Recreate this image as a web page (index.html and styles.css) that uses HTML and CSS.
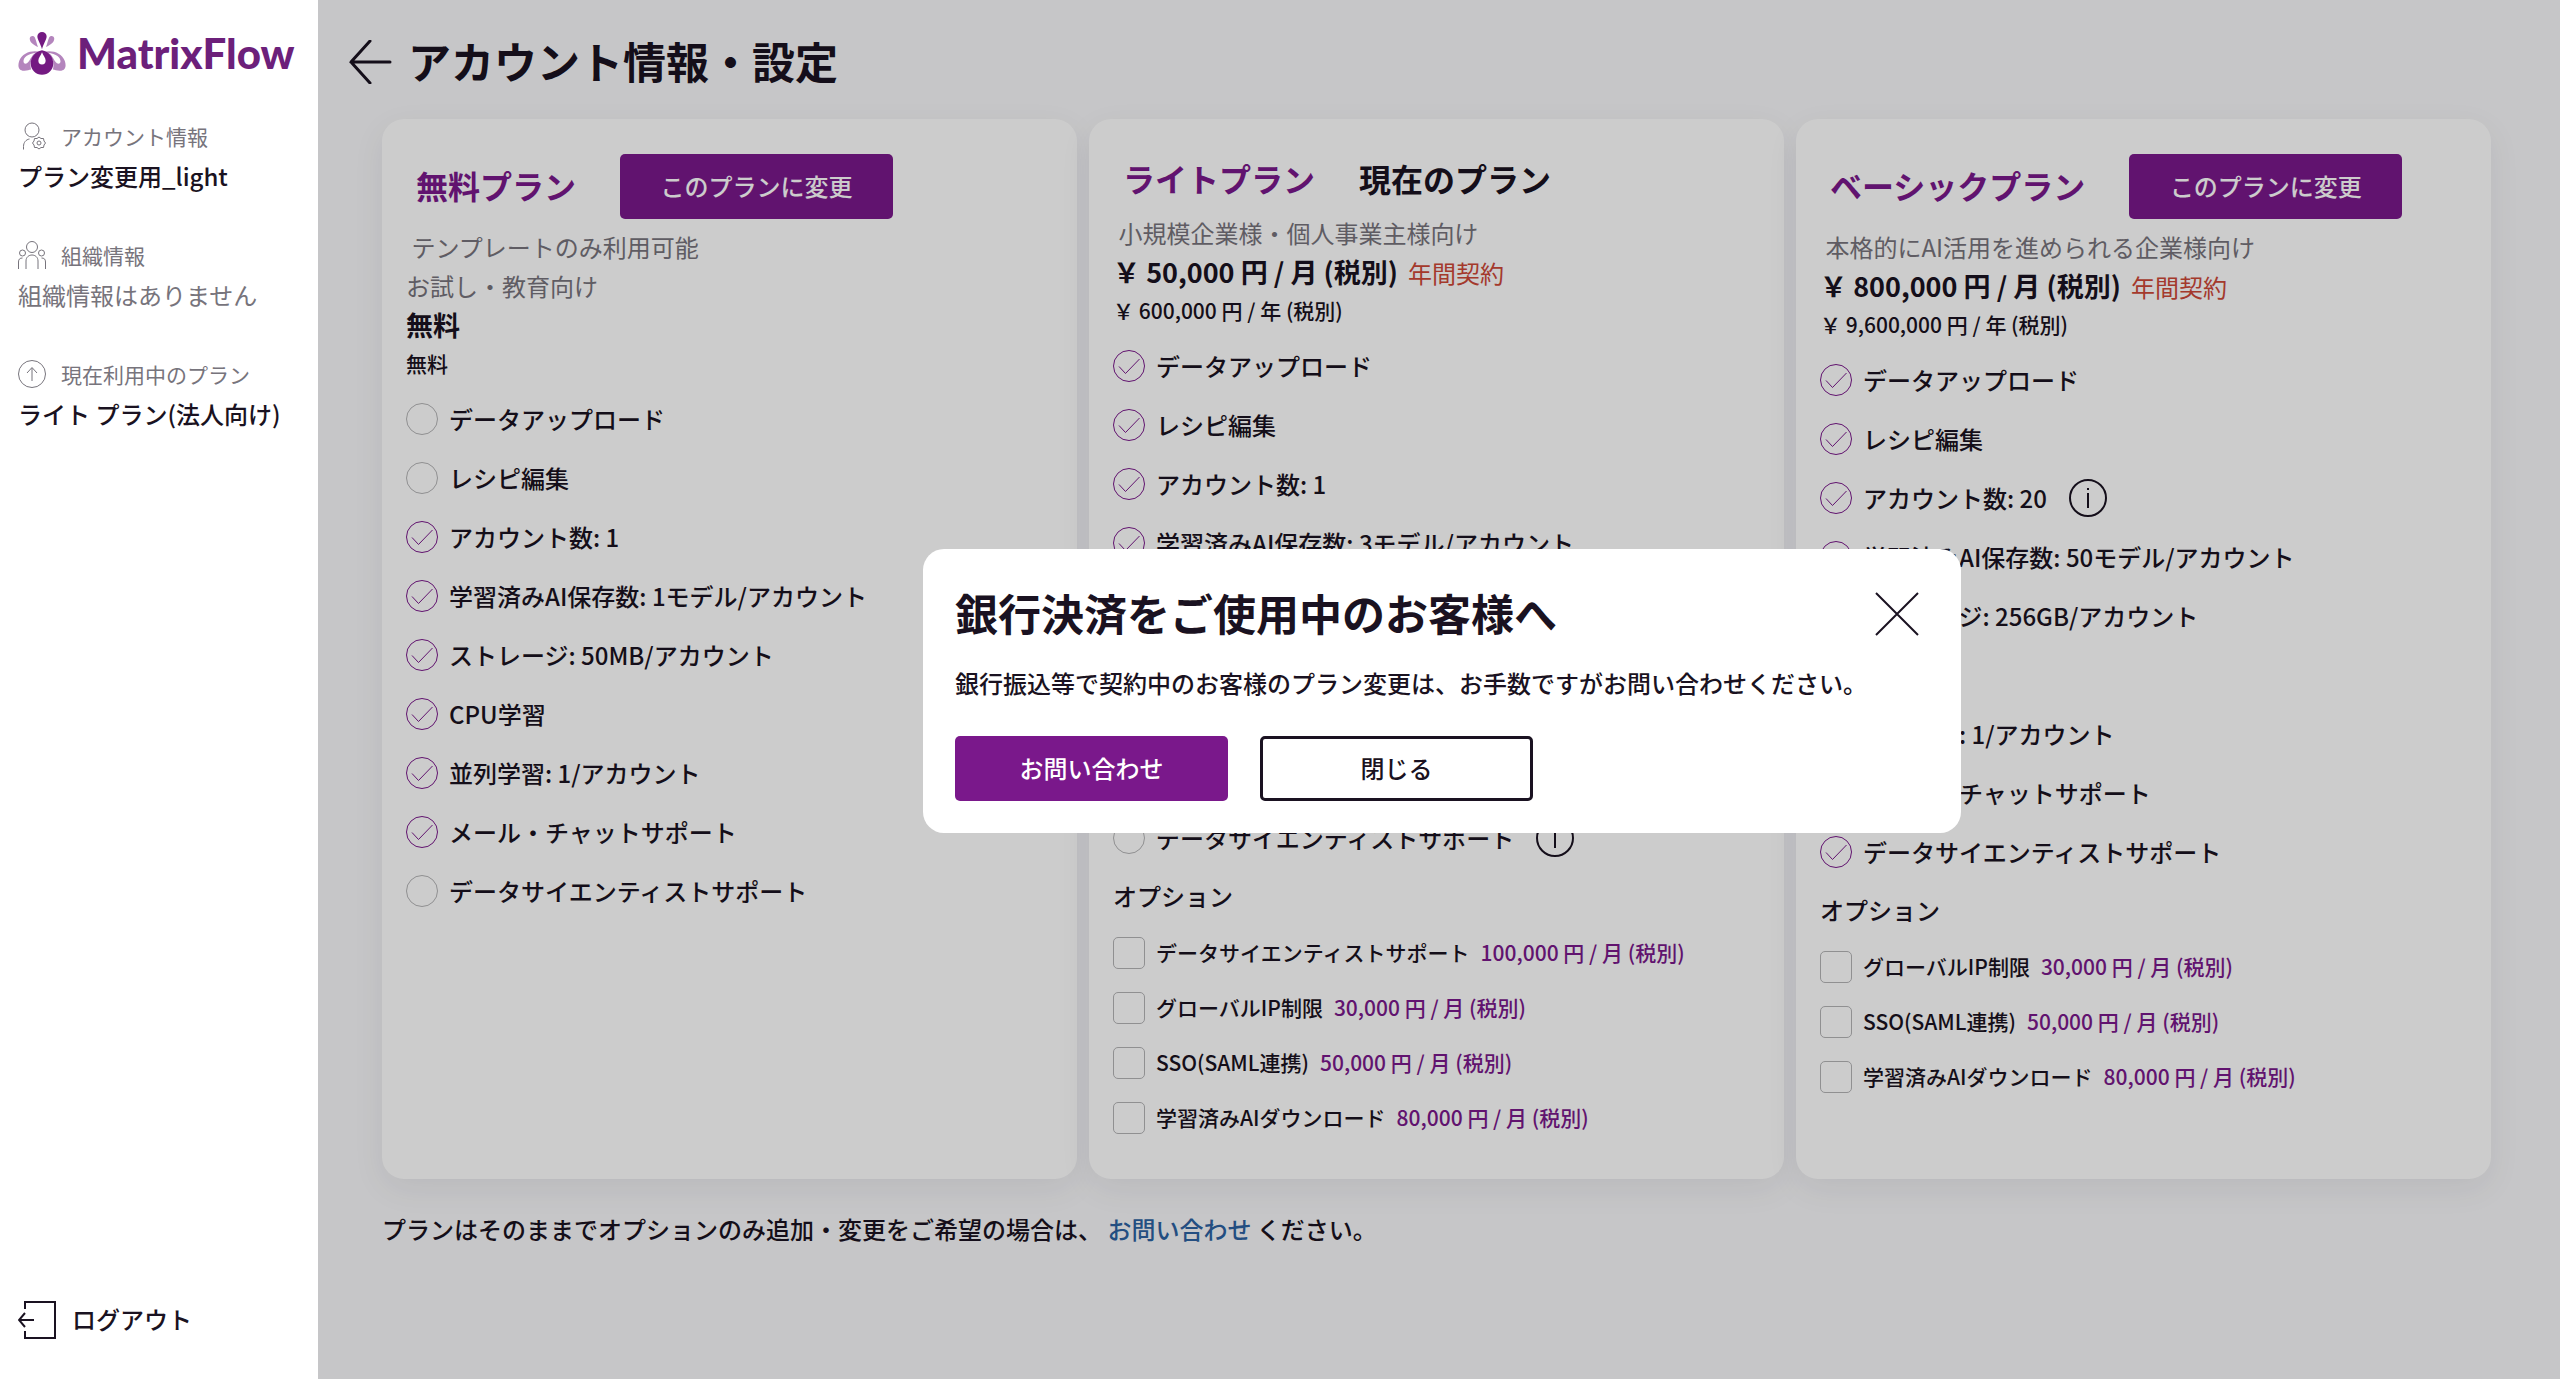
FILE: index.html
```html
<!DOCTYPE html>
<html lang="ja">
<head>
  <meta charset="UTF-8" />
  <title>アカウント情報・設定 | MatrixFlow</title>
  <meta name="viewport" content="width=device-width, initial-scale=1.0" />
  <link rel="stylesheet" href="styles.css">
</head>
<body>
  <!-- shared icons -->
  <svg class="sprite" aria-hidden="true">
    <symbol id="on" viewBox="0 0 32 32">
      <circle cx="16" cy="16" r="15.5" />
      <path d="M6 16.5l6.500 7L26.500 9" />
    </symbol>
    <symbol id="off" viewBox="0 0 32 32">
      <circle cx="16" cy="16" r="15.5" />
    </symbol>
    <symbol id="info" viewBox="0 0 38 38">
      <circle cx="19" cy="19" r="18" />
      <path d="M19 14v15M19 9v2" />
    </symbol>
  </svg>

  <aside class="sidebar">
    <a class="logo" href="#">
      <svg class="logo-mark" viewBox="0 0 144 130" aria-hidden="true">
        <path class="deep" d="M72 52C68 36 58 24 58 13a14 13 0 0 1 28 0C86 24 76 36 72 52z" />
        <path class="pale" d="M60 45C46 40 34 30 35 19c2-9 13-9 16-1 4 9 5 18 9 27z" />
        <path class="pale" d="M84 45c14-5 26-15 25-26-2-9-13-9-16-1-4 9-5 18-9 27z" />
        <path class="pale" fill-rule="evenodd" d="M66 60C42 54 12 62 3 88c-6 18 0 30 16 29 8-1 15-3 20-4-6-22 4-43 27-53zM56 63C38 66 36 96 22 96 10 94 14 66 56 63z" />
        <path class="pale" fill-rule="evenodd" d="M78 60c24-6 54 2 63 28 6 18 0 30-16 29-8-1-15-3-20-4 6-22-4-43-27-53zM88 63c18 3 20 33 34 33 12-2 8-30-34-33z" />
        <path class="deep" fill-rule="evenodd" d="M72 55c22 4 34 22 34 40a34 34 0 0 1-68 0c0-18 12-36 34-40zM72 61c-3 9-11 17-11 25a11 12 0 0 0 22 0c0-8-8-16-11-25z" />
      </svg>
      <span>MatrixFlow</span>
    </a>

    <section class="side-item">
      <h2>
        <svg viewBox="0 0 28 28" aria-hidden="true">
          <circle cx="14" cy="8" r="7" />
          <path d="M5.500 27.500v-3c0-4 2.500-7 6-7.500" />
          <path d="M19 16.500l2-1.500 2 1.500h2.500l.5 2.500 1.500 2-1.500 2-.5 2.500H23l-2 1.500-2-1.500h-2.500L16 23l-1.500-2 1.500-2 .5-2.500z" />
          <circle cx="21" cy="21" r="2" />
        </svg>
        アカウント情報
      </h2>
      <p>プラン変更用_light</p>
    </section>

    <section class="side-item muted">
      <h2>
        <svg viewBox="0 0 28 28" aria-hidden="true">
          <circle cx="14" cy="6" r="5.500" />
          <circle cx="4.500" cy="12" r="3" />
          <circle cx="23.500" cy="12" r="3" />
          <path d="M8 28v-8c0-8 12-8 12 0v8M.5 28v-7c0-3 1.500-4 4-4M27.500 28v-7c0-3-1.500-4-4-4" />
        </svg>
        組織情報
      </h2>
      <p>組織情報はありません</p>
    </section>

    <section class="side-item">
      <h2>
        <svg viewBox="0 0 28 28" aria-hidden="true">
          <circle cx="14" cy="14" r="13.500" />
          <path d="M14 21V8M9 13l5-5.500 5 5.500" />
        </svg>
        現在利用中のプラン
      </h2>
      <p>ライト プラン(法人向け)</p>
    </section>

    <button class="logout" type="button">
      <svg viewBox="0 0 38 38" aria-hidden="true">
        <path d="M7 8V1h30v36H7v-7M1 19h15M7 12l-6 7 6 7" />
      </svg>
      <span>ログアウト</span>
    </button>
  </aside>

  <main class="main">
    <header class="page-header">
      <a href="#" aria-label="戻る">
        <svg viewBox="0 0 44 44"><path d="M42 22H3M22 1L3 22l19 21" /></svg>
      </a>
      <h1>アカウント情報・設定</h1>
    </header>

    <div class="plans">
      <article class="plan">
        <div class="plan-header">
          <h2>無料プラン</h2>
          <button class="btn btn-primary" type="button">このプランに変更</button>
        </div>
        <p class="desc">&nbsp;テンプレートのみ利用可能<br>お試し・教育向け</p>
        <p class="price">無料</p>
        <p class="yearly">無料</p>
        <ul class="features">
          <li class="off"><svg><use href="#off" /></svg>データアップロード</li>
          <li class="off"><svg><use href="#off" /></svg>レシピ編集</li>
          <li><svg><use href="#on" /></svg>アカウント数: 1</li>
          <li><svg><use href="#on" /></svg>学習済みAI保存数: 1モデル/アカウント</li>
          <li><svg><use href="#on" /></svg>ストレージ: 50MB/アカウント</li>
          <li><svg><use href="#on" /></svg>CPU学習</li>
          <li><svg><use href="#on" /></svg>並列学習: 1/アカウント</li>
          <li><svg><use href="#on" /></svg>メール・チャットサポート</li>
          <li class="off"><svg><use href="#off" /></svg>データサイエンティストサポート</li>
        </ul>
      </article>

      <article class="plan">
        <div class="plan-header">
          <h2>ライトプラン</h2>
          <strong>現在のプラン</strong>
        </div>
        <p class="desc">&nbsp;小規模企業様・個人事業主様向け</p>
        <p class="price">&#65509; 50,000 円 / 月 (税別) <span class="term">年間契約</span></p>
        <p class="yearly">&#65509; 600,000 円 / 年 (税別)</p>
        <ul class="features">
          <li><svg><use href="#on" /></svg>データアップロード</li>
          <li><svg><use href="#on" /></svg>レシピ編集</li>
          <li><svg><use href="#on" /></svg>アカウント数: 1</li>
          <li><svg><use href="#on" /></svg>学習済みAI保存数: 3モデル/アカウント</li>
          <li><svg><use href="#on" /></svg>ストレージ: 10GB/アカウント</li>
          <li><svg><use href="#on" /></svg>CPU学習</li>
          <li><svg><use href="#on" /></svg>並列学習: 1/アカウント</li>
          <li><svg><use href="#on" /></svg>メール・チャットサポート</li>
          <li class="off"><svg><use href="#off" /></svg>データサイエンティストサポート<svg class="info"><use href="#info" /></svg></li>
        </ul>
        <h3>オプション</h3>
        <div class="options">
          <label><input type="checkbox">データサイエンティストサポート <span>100,000 円 / 月 (税別)</span></label>
          <label><input type="checkbox">グローバルIP制限 <span>30,000 円 / 月 (税別)</span></label>
          <label><input type="checkbox">SSO(SAML連携) <span>50,000 円 / 月 (税別)</span></label>
          <label><input type="checkbox">学習済みAIダウンロード <span>80,000 円 / 月 (税別)</span></label>
        </div>
      </article>

      <article class="plan">
        <div class="plan-header">
          <h2>ベーシックプラン</h2>
          <button class="btn btn-primary" type="button">このプランに変更</button>
        </div>
        <p class="desc">&nbsp;本格的にAI活用を進められる企業様向け</p>
        <p class="price">&#65509; 800,000 円 / 月 (税別) <span class="term">年間契約</span></p>
        <p class="yearly">&#65509; 9,600,000 円 / 年 (税別)</p>
        <ul class="features">
          <li><svg><use href="#on" /></svg>データアップロード</li>
          <li><svg><use href="#on" /></svg>レシピ編集</li>
          <li><svg><use href="#on" /></svg>アカウント数: 20<svg class="info"><use href="#info" /></svg></li>
          <li><svg><use href="#on" /></svg>学習済みAI保存数: 50モデル/アカウント</li>
          <li><svg><use href="#on" /></svg>ストレージ: 256GB/アカウント</li>
          <li><svg><use href="#on" /></svg>CPU学習</li>
          <li><svg><use href="#on" /></svg>並列学習: 1/アカウント</li>
          <li><svg><use href="#on" /></svg>メール・チャットサポート</li>
          <li><svg><use href="#on" /></svg>データサイエンティストサポート</li>
        </ul>
        <h3>オプション</h3>
        <div class="options">
          <label><input type="checkbox">グローバルIP制限 <span>30,000 円 / 月 (税別)</span></label>
          <label><input type="checkbox">SSO(SAML連携) <span>50,000 円 / 月 (税別)</span></label>
          <label><input type="checkbox">学習済みAIダウンロード <span>80,000 円 / 月 (税別)</span></label>
        </div>
      </article>
    </div>

    <p class="note">プランはそのままでオプションのみ追加・変更をご希望の場合は、 <a href="#">お問い合わせ</a> ください。</p>

    <div class="overlay">
      <div class="modal" role="dialog" aria-labelledby="modalTitle">
        <div class="modal-header">
          <h2 id="modalTitle">銀行決済をご使用中のお客様へ</h2>
          <button class="close" type="button" aria-label="閉じる">
            <svg viewBox="0 0 44 44"><path d="M1 1l42 42M43 1L1 43" /></svg>
          </button>
        </div>
        <p>銀行振込等で契約中のお客様のプラン変更は、お手数ですがお問い合わせください。</p>
        <div class="modal-actions">
          <button class="btn btn-primary" type="button">お問い合わせ</button>
          <button class="btn btn-outline" type="button">閉じる</button>
        </div>
      </div>
    </div>
  </main>
</body>
</html>
```

FILE: styles.css
```css
:root {
  --primary: #7a188b;
  --text: #1a1221;
  --gray: #77747c;
  --line: #b4b4b6;
  --bg: #f8f8fa;
}

* {
  box-sizing: border-box;
}

body {
  font-family: "Noto Sans CJK JP", sans-serif;
  font-size: 24px;
  font-weight: 500;
  line-height: 35px;
  color: var(--text);
  background: var(--bg);
  margin: 0;
  display: flex;
  min-height: 100vh;
}

h1, h2, h3, p, ul {
  margin: 0;
  padding: 0;
}

a {
  color: inherit;
  text-decoration: none;
}

button {
  font: inherit;
  color: inherit;
  cursor: pointer;
}

svg {
  display: block;
  flex-shrink: 0;
  fill: none;
  stroke: currentColor;
}

.sprite {
  position: absolute;
  width: 0;
  height: 0;
}

/* sidebar */
.sidebar {
  width: 318px;
  flex-shrink: 0;
  background: white;
  padding: 29px 18px 36px;
  display: flex;
  flex-direction: column;
}

.logo {
  display: flex;
  align-items: center;
  gap: 11px;
  height: 48px;
  margin-bottom: 43px;
  font-family: Lato, sans-serif;
  font-size: 42px;
  font-weight: 900;
  color: #6c207a;
}

.logo-mark {
  width: 48px;
  height: 43px;
  stroke: none;
}

.logo-mark .deep {
  fill: #741a82;
}

.logo-mark .pale {
  fill: #b485bd;
}

.side-item {
  margin-bottom: 42px;
}

.side-item h2 {
  display: flex;
  align-items: center;
  gap: 15px;
  height: 32px;
  font-size: 21px;
  font-weight: 400;
  color: var(--gray);
}

.side-item svg {
  width: 28px;
  height: 28px;
}

.side-item p {
  padding-top: 2px;
  line-height: 43px;
}

.muted p {
  font-weight: 400;
  color: var(--gray);
}

.logout {
  display: flex;
  align-items: center;
  gap: 16px;
  margin-top: auto;
  padding: 0;
  border: none;
  background: none;
}

.logout svg {
  width: 38px;
  height: 46px;
  stroke-width: 2;
}

.logout span {
  padding-bottom: 3px;
}

/* plan page */
.main {
  position: relative;
  flex: 1;
  padding: 28px 69px 0 64px;
}

.page-header {
  display: flex;
  align-items: center;
  gap: 16px;
  height: 67px;
  margin: 0 0 24px -34px;
}

.page-header svg {
  width: 44px;
  height: 44px;
  stroke-width: 3;
  stroke-linecap: round;
}

.page-header h1 {
  padding-bottom: 3px;
  font-size: 43px;
  font-weight: 700;
}

.plans {
  display: grid;
  grid-template-columns: repeat(3, 1fr);
  gap: 12px;
}

.plan {
  background: white;
  border-radius: 22px;
  box-shadow: 0 10px 32px rgba(30, 30, 60, 0.07);
  padding: 35px 24px 34px;
}

.plan-header {
  display: flex;
  align-items: center;
  gap: 44px;
  min-height: 51px;
  margin-bottom: 8px;
  padding-left: 10px;
}

.plan-header h2,
.plan-header strong {
  padding-bottom: 2px;
  font-size: 32px;
  font-weight: 700;
}

.plan-header h2 {
  color: var(--primary);
}

.btn {
  width: 273px;
  height: 65px;
  padding: 0 0 3px;
  border: none;
  border-radius: 5px;
  font-size: 24px;
}

.btn-primary {
  background: var(--primary);
  color: white;
}

.btn-outline {
  background: white;
  border: 3px solid var(--text);
}

.desc {
  line-height: 39px;
  font-weight: 400;
  color: var(--gray);
}

.price {
  font-size: 27px;
  font-weight: 700;
  line-height: 40px;
}

.term {
  margin-left: 4px;
  font-size: 24px;
  font-weight: 400;
  line-height: 24px;
  color: #cd4837;
}

.yearly {
  font-size: 21px;
  line-height: 36px;
}

.features {
  list-style: none;
  margin-top: 8px;
}

.features li {
  display: flex;
  align-items: center;
  gap: 11px;
  height: 59px;
}

.features svg {
  width: 32px;
  height: 32px;
  color: var(--primary);
}

.features .off svg {
  color: var(--line);
}

.features .info,
.features .off .info {
  width: 38px;
  height: 38px;
  margin-left: 11px;
  color: var(--text);
  stroke-width: 2;
}

.plan h3 {
  font-size: 24px;
  font-weight: 500;
  line-height: 58px;
}

.options label {
  display: flex;
  align-items: center;
  gap: 11px;
  height: 55px;
  font-size: 21px;
}

.options input {
  appearance: none;
  width: 32px;
  height: 32px;
  margin: 0;
  border: 1px solid var(--line);
  border-radius: 5px;
}

.options input:checked {
  background: var(--primary);
}

.options span {
  color: var(--primary);
}

.note {
  margin-top: 32px;
}

.note a {
  color: #2c62a2;
}

/* dialog */
.overlay {
  position: absolute;
  inset: 0;
  display: flex;
  justify-content: center;
  align-items: center;
  padding: 3px 0 0 6px;
  background: rgba(0, 0, 0, 0.2);
}

.modal {
  width: 1038px;
  max-width: 90%;
  background: white;
  border-radius: 21px;
  padding: 32px;
}

.modal-header {
  display: flex;
  justify-content: space-between;
  align-items: center;
  height: 65px;
  padding-right: 10px;
}

.modal-header h2 {
  padding-bottom: 3px;
  font-size: 43px;
  font-weight: 700;
}

.close {
  padding: 0;
  border: none;
  background: none;
}

.close svg {
  width: 44px;
  height: 44px;
  stroke-width: 2;
}

.modal p {
  margin: 19px 0 36px;
}

.modal-actions {
  display: flex;
  gap: 32px;
}
```
